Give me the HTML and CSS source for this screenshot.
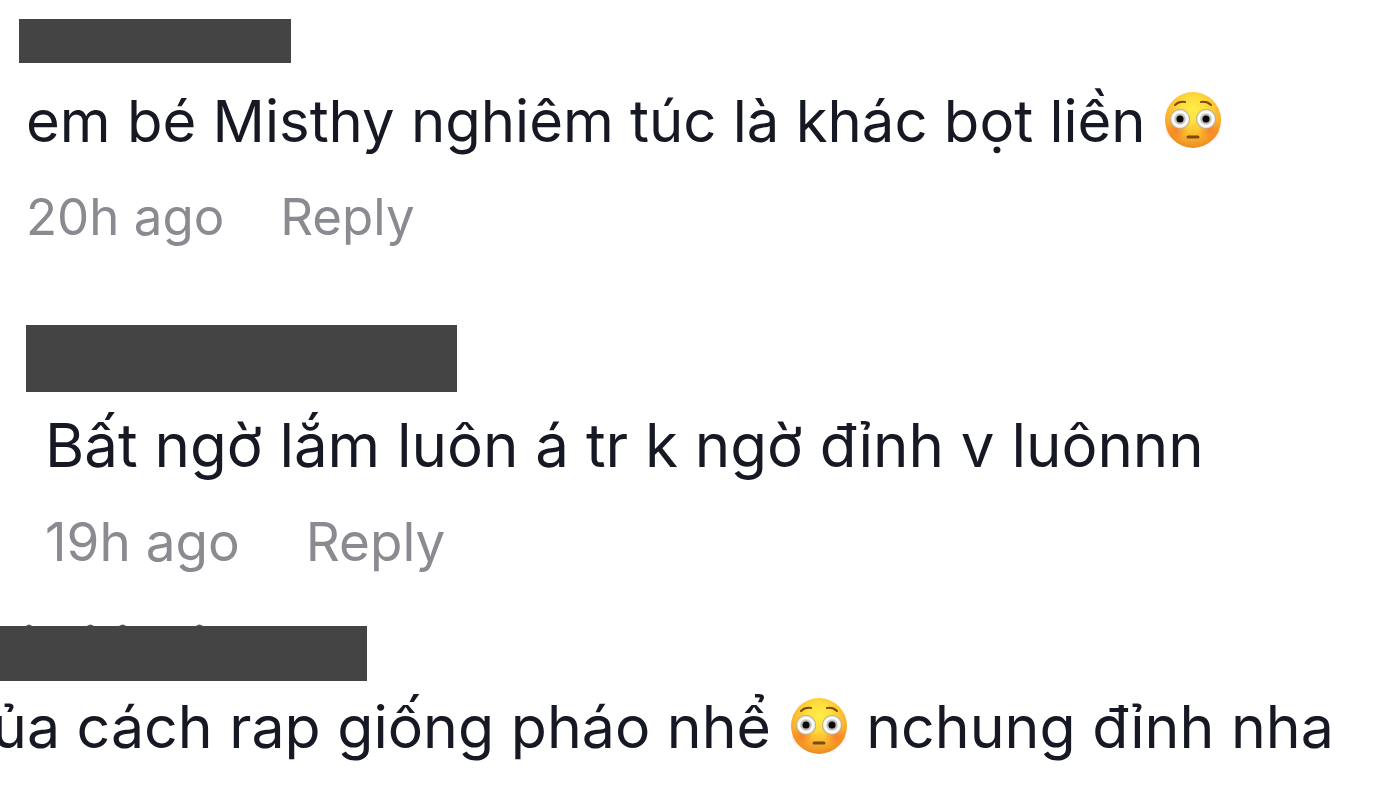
FILE: index.html
```html
<!DOCTYPE html>
<html lang="vi">
<head>
<meta charset="utf-8">
<meta name="viewport" content="width=device-width, initial-scale=1">
<title>Comments</title>
<link rel="stylesheet" href="styles.css">
</head>
<body>
<svg class="defs" aria-hidden="true">
  <defs>
    <radialGradient id="skin" cx="50%" cy="32%" r="68%">
      <stop offset="0" stop-color="#ffee48"/>
      <stop offset=".35" stop-color="#ffdc3c"/>
      <stop offset=".7" stop-color="#fbb42c"/>
      <stop offset="1" stop-color="#ea8a24"/>
    </radialGradient>
    <radialGradient id="blush">
      <stop offset="0" stop-color="#fb7426" stop-opacity=".8"/>
      <stop offset="1" stop-color="#fb7426" stop-opacity="0"/>
    </radialGradient>
    <radialGradient id="eye">
      <stop offset="0" stop-color="#777"/>
      <stop offset=".5" stop-color="#c4c4c2"/>
      <stop offset=".65" stop-color="#fff"/>
      <stop offset=".82" stop-color="#f6f6f4"/>
      <stop offset="1" stop-color="#a39a80"/>
    </radialGradient>
    <symbol id="flushed" viewBox="0 0 58 58">
      <circle cx="29" cy="29" r="28" fill="url(#skin)"/>
      <circle cx="12" cy="39" r="11" fill="url(#blush)"/>
      <circle cx="46" cy="39" r="11" fill="url(#blush)"/>
      <path d="M11 14Q15 10 21 11M37 11Q43 10 47 14" fill="none" stroke="#7d4a10" stroke-width="2" stroke-linecap="round"/>
      <circle cx="16" cy="28" r="10" fill="url(#eye)"/>
      <circle cx="42" cy="28" r="10" fill="url(#eye)"/>
      <circle cx="16" cy="28" r="3.500" fill="#090909"/>
      <circle cx="42" cy="28" r="3.500" fill="#090909"/>
      <path d="M24 46H34" stroke="#7d4a10" stroke-width="3" stroke-linecap="round"/>
    </symbol>
  </defs>
</svg>
<main class="comments">
  <article class="comment first">
    <div class="name"></div>
    <p class="text">em bé Misthy nghiêm túc là khác bọt liền <svg class="emoji" role="img" aria-label="flushed face"><use href="#flushed"/></svg></p>
    <div class="meta"><span>20h ago</span><button type="button">Reply</button></div>
  </article>
  <article class="comment second">
    <div class="name"></div>
    <p class="text">Bất ngờ lắm luôn á tr k ngờ đỉnh v luônnn</p>
    <div class="meta"><span>19h ago</span><button type="button">Reply</button></div>
  </article>
  <article class="comment third">
    <svg class="tips" viewBox="0 0 367 2" aria-hidden="true"><path d="M26 2Q29 -1 32 2ZM87 2Q90 -1 94 2ZM119 2Q123 -1 126 2ZM196 2Q199 -1 203 2Z" fill="#55565c"/></svg>
    <div class="name"></div>
    <p class="text">ủa cách rap giống pháo nhể <svg class="emoji" role="img" aria-label="flushed face"><use href="#flushed"/></svg> nchung đỉnh nha</p>
  </article>
</main>
</body>
</html>
```
FILE: styles.css
```css
body { margin: 0; background: #fff; color: #161823; font-family: Inter, "Noto Sans", sans-serif; overflow-x: hidden; }
.defs { position: absolute; width: 0; height: 0; }
.comments { display: flex; flex-direction: column; padding-top: 19px; }
.name { background: #444; }
.text { margin: 0; font-size: 58px; line-height: 72px; white-space: nowrap; }
.emoji { width: 58px; height: 58px; margin: 0 2px; vertical-align: -7px; }
.meta { display: flex; align-items: center; gap: 56px; color: #8a8b91; font-size: 51px; line-height: 64px; }
.meta button { padding: 0; border: 0; background: none; color: inherit; font: inherit; cursor: pointer; }
.first { padding-left: 26px; }
.first .name { width: 272px; height: 44px; margin-left: -7px; }
.first .text { padding-top: 22px; }
.first .meta { padding-top: 28px; }
.second { padding: 76px 0 0 45px; }
.second .name { width: 431px; height: 67px; margin-left: -19px; }
.second .text { padding-top: 17px; font-size: 60px; }
.second .meta { padding-top: 29px; gap: 66px; font-size: 53px; }
.third { padding-top: 50px; }
.tips { display: block; width: 367px; height: 2px; }
.third .name { width: 367px; height: 55px; }
.third .text { padding-top: 10px; margin-left: -8px; font-size: 59px; }
```
